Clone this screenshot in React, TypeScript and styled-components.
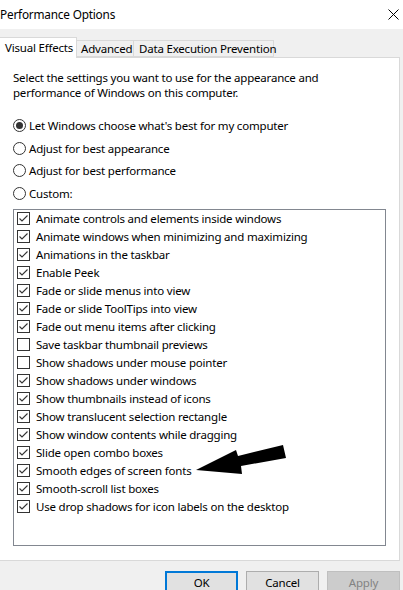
import styled, { createGlobalStyle } from "styled-components";

const GlobalStyle = createGlobalStyle`
  html, body {
    margin: 0;
    padding: 0;
    background: #f0f0f0;
  }
  body {
    font-family: "Noto Sans", "Open Sans", sans-serif;
    font-size: 11.5px;
    letter-spacing: -0.2px;
    color: #000;
  }
`;

const Window = styled.div`
  position: relative;
  width: 403px;
  height: 590px;
  overflow: hidden;
  background: #f0f0f0;
`;

const TitleBar = styled.div`
  height: 29px;
  background: #fff;
  display: flex;
  align-items: center;
  justify-content: space-between;
`;

const Title = styled.div`
  font-size: 11.8px;
  margin-top: -2px;
`;

const CloseButton = styled.div`
  width: 46px;
  height: 29px;
  display: flex;
  align-items: center;
  justify-content: center;
  margin-right: -13px;
`;

const Body = styled.div`
  margin-left: -1px;
  padding-top: 7px;
  padding-right: 3px;
`;

const TabStrip = styled.div`
  display: flex;
  align-items: flex-end;
  height: 21px;
`;

const Tab = styled.div<{ $active?: boolean; $width: number; $pad: number }>`
  width: ${(p) => p.$width}px;
  height: ${(p) => (p.$active ? 21 : 17)}px;
  box-sizing: border-box;
  padding: ${(p) => (p.$active ? 2 : 0)}px 0 0 ${(p) => p.$pad}px;
  background: ${(p) => (p.$active ? "#fff" : "#f0f0f0")};
  border: 1px solid #d9d9d9;
  border-bottom: ${(p) => (p.$active ? "none" : "1px solid #d9d9d9")};
  margin-left: ${(p) => (p.$active ? 0 : -1)}px;
  position: relative;
  z-index: ${(p) => (p.$active ? 2 : 1)};
  margin-bottom: ${(p) => (p.$active ? -1 : 0)}px;
  line-height: 15px;
  white-space: nowrap;
`;

const Panel = styled.div`
  background: #fff;
  border: 1px solid #d9d9d9;
  height: 504px;
  box-sizing: border-box;
  padding: 12px 0 0 13px;
`;

const Description = styled.p`
  margin: 0;
  line-height: 15px;
  width: 335px;
`;

const RadioGroup = styled.div`
  margin-top: 14px;
  display: flex;
  flex-direction: column;
`;

const RadioRow = styled.label`
  display: flex;
  align-items: center;
  height: 22.7px;
  gap: 3px;
`;

const RadioCircle = styled.span<{ $checked?: boolean }>`
  width: 13px;
  height: 13px;
  box-sizing: border-box;
  border: 1px solid #333;
  border-radius: 50%;
  display: flex;
  align-items: center;
  justify-content: center;
  &::after {
    content: "";
    width: 7px;
    height: 7px;
    border-radius: 50%;
    background: ${(p) => (p.$checked ? "#333" : "transparent")};
  }
`;

const ListBox = styled.div`
  margin-top: 4px;
  width: 373px;
  height: 337px;
  box-sizing: border-box;
  border: 1px solid #828790;
  padding: 0 0 0 3px;
`;

const CheckRow = styled.label`
  display: flex;
  align-items: center;
  height: 18px;
  gap: 6px;
`;

const CheckBox = styled.span`
  width: 13px;
  height: 13px;
  box-sizing: border-box;
  border: 1px solid #333;
  display: flex;
  align-items: center;
  justify-content: center;
  background: #fff;
`;

const ButtonRow = styled.div`
  display: flex;
  justify-content: flex-end;
  gap: 8px;
  padding-top: 10px;
`;

const Button = styled.button<{ $variant?: "default" | "disabled" }>`
  width: 73px;
  height: 23px;
  box-sizing: border-box;
  font-family: inherit;
  font-size: 11.5px;
  letter-spacing: inherit;
  padding: 0;
  background: ${(p) => (p.$variant === "disabled" ? "#cccccc" : "#e1e1e1")};
  color: ${(p) => (p.$variant === "disabled" ? "#838383" : "#000")};
  border: ${(p) =>
    p.$variant === "default"
      ? "2px solid #0078d7"
      : p.$variant === "disabled"
      ? "1px solid #bfbfbf"
      : "1px solid #adadad"};
`;

const Arrow = styled.svg`
  position: absolute;
  left: 0;
  top: 0;
  pointer-events: none;
`;

const effects: [string, boolean][] = [
  ["Animate controls and elements inside windows", true],
  ["Animate windows when minimizing and maximizing", true],
  ["Animations in the taskbar", true],
  ["Enable Peek", true],
  ["Fade or slide menus into view", true],
  ["Fade or slide ToolTips into view", true],
  ["Fade out menu items after clicking", true],
  ["Save taskbar thumbnail previews", false],
  ["Show shadows under mouse pointer", false],
  ["Show shadows under windows", true],
  ["Show thumbnails instead of icons", true],
  ["Show translucent selection rectangle", true],
  ["Show window contents while dragging", true],
  ["Slide open combo boxes", true],
  ["Smooth edges of screen fonts", true],
  ["Smooth-scroll list boxes", true],
  ["Use drop shadows for icon labels on the desktop", true],
];

const radios = [
  "Let Windows choose what's best for my computer",
  "Adjust for best appearance",
  "Adjust for best performance",
  "Custom:",
];

function Check() {
  return (
    <svg width="11" height="11" viewBox="0 0 11 11">
      <polyline points="1.5,5.5 4,8 9.5,2.5" fill="none" stroke="#333" strokeWidth="1.1" />
    </svg>
  );
}

export default function App() {
  return (
    <Window>
      <GlobalStyle />
      <TitleBar>
        <Title>Performance Options</Title>
        <CloseButton>
          <svg width="11" height="11" viewBox="0 0 11 11">
            <path d="M0.5 0.5 L10.5 10.5 M10.5 0.5 L0.5 10.5" stroke="#000" strokeWidth="1" />
          </svg>
        </CloseButton>
      </TitleBar>
      <Body>
        <TabStrip>
          <Tab $active $width={78} $pad={5}>
            Visual Effects
          </Tab>
          <Tab $width={58} $pad={4}>
            Advanced
          </Tab>
          <Tab $width={141} $pad={5}>
            Data Execution Prevention
          </Tab>
        </TabStrip>
        <Panel>
          <Description>
            Select the settings you want to use for the appearance and performance of Windows on this computer.
          </Description>
          <RadioGroup>
            {radios.map((r, i) => (
              <RadioRow key={r}>
                <RadioCircle $checked={i === 0} />
                {r}
              </RadioRow>
            ))}
          </RadioGroup>
          <ListBox>
            {effects.map(([label, on]) => (
              <CheckRow key={label}>
                <CheckBox>{on && <Check />}</CheckBox>
                {label}
              </CheckRow>
            ))}
          </ListBox>
        </Panel>
        <ButtonRow>
          <Button $variant="default">OK</Button>
          <Button>Cancel</Button>
          <Button $variant="disabled">Apply</Button>
        </ButtonRow>
      </Body>
      <Arrow width="403" height="590">
        <polygon
          points="196,470 236,450 238,456 283,445 286,458 241,466 242,474"
          fill="#000"
        />
      </Arrow>
    </Window>
  );
}
